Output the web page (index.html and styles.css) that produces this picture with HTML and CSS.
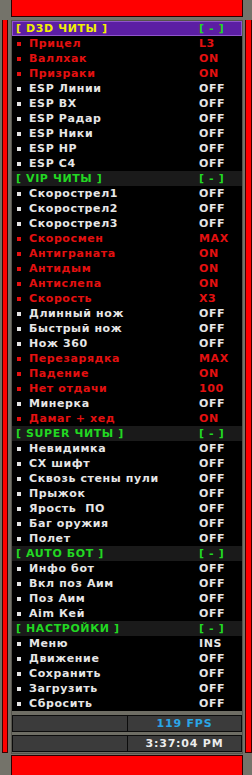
FILE: index.html
```html
<!DOCTYPE html>
<html>
<head>
<meta charset="utf-8">
<link rel="stylesheet" href="styles.css">
</head>
<body>
<div class="screen">
  <div class="strip strip-left"></div>
  <div class="center">
    <div class="bar bar-top"></div>
    <div class="panel">
      <div class="list">
        <div class="head head-main"><span class="htitle">[ D3D ЧИТЫ ]</span><span class="hval">[ - ]</span></div>
        <div class="row red"><span class="name"><i class="dot"></i>Прицел</span><span class="val">L3</span></div>
        <div class="row red"><span class="name"><i class="dot"></i>Валлхак</span><span class="val">ON</span></div>
        <div class="row red"><span class="name"><i class="dot"></i>Призраки</span><span class="val">ON</span></div>
        <div class="row"><span class="name"><i class="dot"></i>ESP Линии</span><span class="val">OFF</span></div>
        <div class="row"><span class="name"><i class="dot"></i>ESP ВХ</span><span class="val">OFF</span></div>
        <div class="row"><span class="name"><i class="dot"></i>ESP Радар</span><span class="val">OFF</span></div>
        <div class="row"><span class="name"><i class="dot"></i>ESP Ники</span><span class="val">OFF</span></div>
        <div class="row"><span class="name"><i class="dot"></i>ESP HP</span><span class="val">OFF</span></div>
        <div class="row"><span class="name"><i class="dot"></i>ESP C4</span><span class="val">OFF</span></div>
        <div class="head"><span class="htitle">[ VIP ЧИТЫ ]</span><span class="hval">[ - ]</span></div>
        <div class="row"><span class="name"><i class="dot"></i>Скорострел1</span><span class="val">OFF</span></div>
        <div class="row"><span class="name"><i class="dot"></i>Скорострел2</span><span class="val">OFF</span></div>
        <div class="row"><span class="name"><i class="dot"></i>Скорострел3</span><span class="val">OFF</span></div>
        <div class="row red"><span class="name"><i class="dot"></i>Скоросмен</span><span class="val">MAX</span></div>
        <div class="row red"><span class="name"><i class="dot"></i>Антиграната</span><span class="val">ON</span></div>
        <div class="row red"><span class="name"><i class="dot"></i>Антидым</span><span class="val">ON</span></div>
        <div class="row red"><span class="name"><i class="dot"></i>Антислепа</span><span class="val">ON</span></div>
        <div class="row red"><span class="name"><i class="dot"></i>Скорость</span><span class="val">X3</span></div>
        <div class="row"><span class="name"><i class="dot"></i>Длинный нож</span><span class="val">OFF</span></div>
        <div class="row"><span class="name"><i class="dot"></i>Быстрый нож</span><span class="val">OFF</span></div>
        <div class="row"><span class="name"><i class="dot"></i>Нож 360</span><span class="val">OFF</span></div>
        <div class="row red"><span class="name"><i class="dot"></i>Перезарядка</span><span class="val">MAX</span></div>
        <div class="row red"><span class="name"><i class="dot"></i>Падение</span><span class="val">ON</span></div>
        <div class="row red"><span class="name"><i class="dot"></i>Нет отдачи</span><span class="val">100</span></div>
        <div class="row"><span class="name"><i class="dot"></i>Минерка</span><span class="val">OFF</span></div>
        <div class="row red"><span class="name"><i class="dot"></i>Дамаг + хед</span><span class="val">ON</span></div>
        <div class="head"><span class="htitle">[ SUPER ЧИТЫ ]</span><span class="hval">[ - ]</span></div>
        <div class="row"><span class="name"><i class="dot"></i>Невидимка</span><span class="val">OFF</span></div>
        <div class="row"><span class="name"><i class="dot"></i>СХ шифт</span><span class="val">OFF</span></div>
        <div class="row"><span class="name"><i class="dot"></i>Сквозь стены пули</span><span class="val">OFF</span></div>
        <div class="row"><span class="name"><i class="dot"></i>Прыжок</span><span class="val">OFF</span></div>
        <div class="row"><span class="name"><i class="dot"></i>Ярость&nbsp; ПО</span><span class="val">OFF</span></div>
        <div class="row"><span class="name"><i class="dot"></i>Баг оружия</span><span class="val">OFF</span></div>
        <div class="row"><span class="name"><i class="dot"></i>Полет</span><span class="val">OFF</span></div>
        <div class="head"><span class="htitle">[ AUTO БОТ ]</span><span class="hval">[ - ]</span></div>
        <div class="row"><span class="name"><i class="dot"></i>Инфо бот</span><span class="val">OFF</span></div>
        <div class="row"><span class="name"><i class="dot"></i>Вкл поз Аим</span><span class="val">OFF</span></div>
        <div class="row"><span class="name"><i class="dot"></i>Поз Аим</span><span class="val">OFF</span></div>
        <div class="row"><span class="name"><i class="dot"></i>Aim Кей</span><span class="val">OFF</span></div>
        <div class="head"><span class="htitle">[ НАСТРОЙКИ ]</span><span class="hval">[ - ]</span></div>
        <div class="row"><span class="name"><i class="dot"></i>Меню</span><span class="val">INS</span></div>
        <div class="row"><span class="name"><i class="dot"></i>Движение</span><span class="val">OFF</span></div>
        <div class="row"><span class="name"><i class="dot"></i>Сохранить</span><span class="val">OFF</span></div>
        <div class="row"><span class="name"><i class="dot"></i>Загрузить</span><span class="val">OFF</span></div>
        <div class="row"><span class="name"><i class="dot"></i>Сбросить</span><span class="val">OFF</span></div>
      </div>
      <div class="status"><div class="cell"></div><div class="cell fps">119 FPS</div></div>
      <div class="status"><div class="cell"></div><div class="cell time">3:37:04 PM</div></div>
    </div>
    <div class="bar bar-bottom"></div>
  </div>
  <div class="strip strip-right"></div>
</div>
</body>
</html>
```
FILE: styles.css
```css
html, body {
  margin: 0;
  padding: 0;
  background: #74736a;
  height: 775px;
  overflow: hidden;
}
.screen {
  display: flex;
  align-items: flex-start;
  padding-left: 2px;
  font-family: "DejaVu Sans", Verdana, sans-serif;
  font-weight: bold;
  font-size: 11px;
  letter-spacing: 0.6px;
}
.strip {
  width: 4px;
  height: 732px;
  margin-top: 20px;
  background: #ff0000;
  border: 1px solid #3a0000;
  border-top: none;
}
.strip-left { }
.strip-right { margin-left: 2px; width: 5px; }
.center {
  margin-left: 3px;
  width: 232px;
  display: flex;
  flex-direction: column;
}
.bar {
  background: #ff0000;
  border: 1px solid #2a0000;
  border-top: none;
}
.bar-top { height: 16px; margin-bottom: 3px; }
.bar-bottom { height: 20px; margin-top: 1px; border-top: 1px solid #2a0000; }
.panel {
  background: #6e6d64;
  border: 1px solid #55544c;
  padding: 0 0 1px 0;
  display: flex;
  flex-direction: column;
}
.list {
  background: #000;
  display: flex;
  flex-direction: column;
  padding-bottom: 0;
}
.row, .head {
  display: grid;
  grid-template-columns: 187px auto;
  height: 15px;
  line-height: 15px;
  white-space: nowrap;
  color: #e6e6e6;
}
.row .name { padding-left: 5px; display: flex; align-items: center; }
.dot {
  display: inline-block;
  width: 4px;
  height: 4px;
  background: currentColor;
  margin-right: 8px;
}
.row.red { color: #e41010; }
.head {
  background: #1a1a1a;
  color: #22d822;
}
.head .htitle { padding-left: 4px; }
.head-main {
  background: #5c1ea4;
  box-shadow: inset 0 0 0 1px #8f55cc;
}
.head-main .htitle { color: #f2f000; }
.status {
  margin-top: 4px;
  height: 15px;
  border: 1px solid #0c0c0c;
  background: #3b3b3b;
  display: grid;
  grid-template-columns: 114px 1fr;
}
.status + .status { margin-top: 3px; }
.cell { border-left: 1px solid #0c0c0c; text-align: center; line-height: 15px; color: #ececec; font-size: 11px; letter-spacing: 0.8px; }
.cell:first-child { border-left: none; }
.fps { color: #2aa6e6; }
```
